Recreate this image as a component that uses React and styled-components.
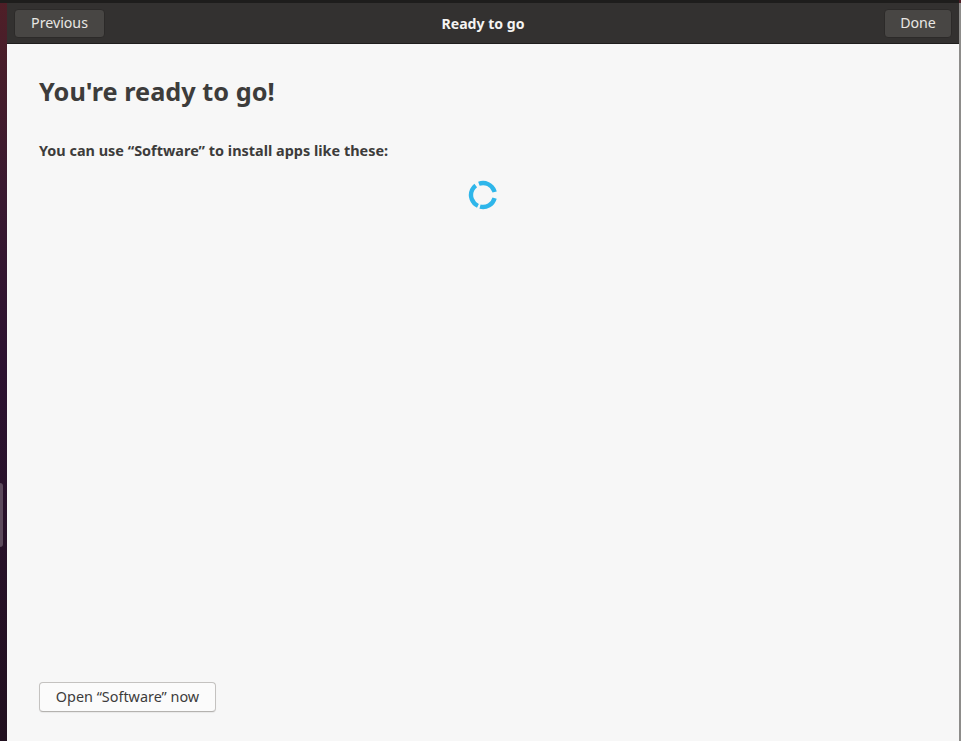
import React from "react"
import styled, { createGlobalStyle } from "styled-components"

const GlobalStyle = createGlobalStyle`
  html, body, #root {
    margin: 0;
    padding: 0;
    height: 100%;
  }
  body {
    overflow: hidden;
    font-family: "Noto Sans", "Open Sans", "DejaVu Sans", sans-serif;
  }
`

const Desktop = styled.div`
  position: relative;
  display: flex;
  width: 961px;
  height: 741px;
  background: linear-gradient(180deg, #4f1f27 0%, #3a1a30 25%, #2c1230 50%, #21101f 100%);
`

const DockHandle = styled.div`
  position: absolute;
  left: 0;
  top: 483px;
  width: 3px;
  height: 64px;
  background: #5c4a5c;
  border-radius: 0 4px 4px 0;
`

const Window = styled.div`
  flex: 1;
  margin-left: 7px;
  display: flex;
  flex-direction: column;
  background: #f7f7f7;
`

const RightEdge = styled.div`
  width: 2px;
  margin-top: 3px;
  background: #8d8c8a;
`

const TopEdge = styled.div`
  height: 3px;
  margin-left: -7px;
  background: #1e1d1c;
`

const HeaderBar = styled.header`
  height: 41px;
  box-sizing: border-box;
  padding: 0 7px;
  display: grid;
  grid-template-columns: 1fr auto 1fr;
  align-items: center;
  background: #333130;
  border-bottom: 1px solid #1f1e1d;
`

const HeaderButton = styled.button`
  justify-self: ${(p) => (p.$end ? "end" : "start")};
  width: ${(p) => p.$width}px;
  height: 29px;
  padding: 0 0 2px;
  border: 1px solid #2c2a29;
  border-radius: 4px;
  background: #484644;
  color: #e8e6e3;
  font: 400 14.2px "Noto Sans", sans-serif;
`

const Title = styled.h1`
  margin: 0;
  color: #f5f4f2;
  font-size: 14.1px;
  font-weight: 700;
`

const Content = styled.main`
  flex: 1;
  display: flex;
  flex-direction: column;
  padding: 29px 32px 29px;
`

const Heading = styled.h2`
  margin: 0;
  color: #3d3c3b;
  font-size: 25.3px;
  line-height: 36px;
  font-weight: 700;
`

const Lead = styled.p`
  margin: 32px 0 0;
  color: #3d3c3b;
  font-size: 14.44px;
  line-height: 20px;
  font-weight: 700;
`

const SpinnerRow = styled.div`
  flex: 1;
  display: flex;
  justify-content: center;
  align-items: flex-start;
  padding-top: 19px;
`

const Spinner = styled.svg`
  display: block;
  width: 30px;
  height: 30px;
  filter: blur(0.5px);
`

const Arc = styled.circle`
  fill: none;
  stroke: #2fb6ea;
  stroke-width: 4.4;
`

const OpenButton = styled.button`
  align-self: flex-start;
  height: 30px;
  width: 177px;
  padding: 0 0 2px;
  border: 1px solid #c4c2c0;
  border-bottom-color: #b4b2af;
  border-radius: 4px;
  background: #fbfbfb;
  box-shadow: 0 1px 1px rgba(0, 0, 0, 0.06);
  color: #3d3c3b;
  font: 400 14.4px "Noto Sans", sans-serif;
`

const App = () => {
  // circumference is about 75.4 for r=12, one dash per segment
  const segments = [
    { dash: "20 55.4", turn: -110 },
    { dash: "18.6 56.8", turn: 15 },
    { dash: "24.5 50.9", turn: 115 },
  ]

  return (
    <>
      <GlobalStyle />
      <Desktop>
        <DockHandle />
        <Window>
          <TopEdge />
          <HeaderBar>
            <HeaderButton $width={91}>Previous</HeaderButton>
            <Title>Ready to go</Title>
            <HeaderButton $width={68} $end>Done</HeaderButton>
          </HeaderBar>
          <Content>
            <Heading>You're ready to go!</Heading>
            <Lead>You can use “Software” to install apps like these:</Lead>
            <SpinnerRow>
              <Spinner viewBox="0 0 30 30">
                {segments.map((s) => (
                  <Arc
                    key={s.turn}
                    cx="15"
                    cy="15"
                    r="12"
                    strokeDasharray={s.dash}
                    transform={`rotate(${s.turn} 15 15)`}
                  />
                ))}
              </Spinner>
            </SpinnerRow>
            <OpenButton>Open “Software” now</OpenButton>
          </Content>
        </Window>
        <RightEdge />
      </Desktop>
    </>
  )
}

export default App
